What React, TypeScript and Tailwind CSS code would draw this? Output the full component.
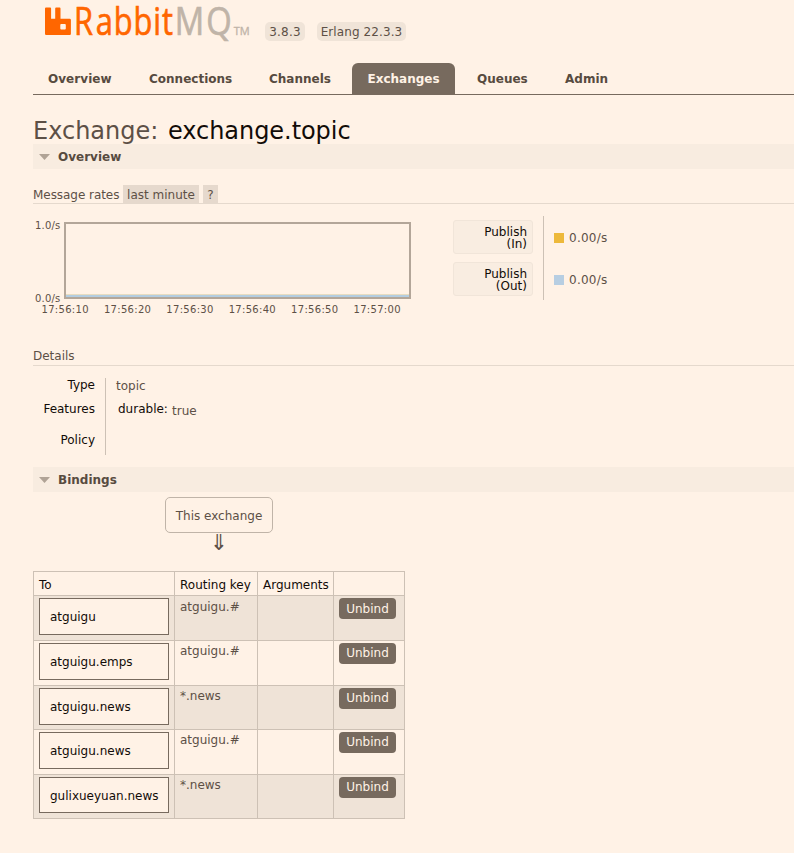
import type { ReactNode } from 'react';

const tabs = [
  { name: 'Overview', cls: 'ml-[15px] w-[65px] tracking-[0.05px]' },
  { name: 'Connections', cls: 'ml-[36px] w-[84px]' },
  { name: 'Channels', cls: 'ml-[36px] w-[63px]' },
  { name: 'Exchanges', cls: '', active: true },
  { name: 'Queues', cls: 'ml-[22px] w-[52px]' },
  { name: 'Admin', cls: 'ml-[36px] w-[45px]' },
];

const times = ['17:56:10', '17:56:20', '17:56:30', '17:56:40', '17:56:50', '17:57:00'];

const bindings = [
  { to: 'atguigu', key: 'atguigu.#', row: 'h-[45px]', box: 'h-[37px] leading-[37px]', keyCls: 'pt-[2px]', btn: 'leading-[23px]' },
  { to: 'atguigu.emps', key: 'atguigu.#', row: 'h-[45px]', box: 'h-[37px] leading-[36px]', keyCls: 'pt-px', btn: 'leading-[21px]' },
  { to: 'atguigu.news', key: '*.news', row: 'h-[44px]', box: 'h-[37px] leading-[36px]', keyCls: 'pt-px', btn: 'leading-[21px]' },
  { to: 'atguigu.news', key: 'atguigu.#', row: 'h-[45px]', box: 'h-[37px] leading-[36px]', keyCls: 'pt-px', btn: 'leading-[21px]' },
  { to: 'gulixueyuan.news', key: '*.news', row: 'h-[44px]', box: 'h-[36px] leading-[36px]', keyCls: 'pt-px', btn: 'leading-[21px]' },
];

function Logo() {
  return (
    <svg width="206" height="48" viewBox="0 0 206 48" className="shrink-0 overflow-visible font-['Open_Sans']">
      <path
        fill="#ff6600"
        d="M1 1.6h4.2q.9 0 .9.9v10.2h4.1V2.5q0-.9.9-.9h3.5q.9 0 .9.9v10.2h9.2q1.2 0 1.2 1.2V28q0 1-1.2 1H1.2Q0 29 0 28V2.6q0-1 1-1zM16.2 18q-.9 0-.9.9v3.7q0 .9.9.9h3.7q.9 0 .9-.9v-3.7q0-.9-.9-.9z"
      />
      <g transform="scale(0.8 1)">
        <text x="36.4 63.4 85.8 110.6 135.4 146.2" y="29" fontSize="38.5" fill="#ff6600" stroke="#ff6600" strokeWidth="0.7">
          Rabbit
        </text>
      </g>
      <g transform="scale(0.85 1)">
        <text x="152.6 189.6" y="29" fontSize="38.5" fill="#c0b4a8" stroke="#c0b4a8" strokeWidth="0.7">
          MQ
        </text>
      </g>
      <text x="188.8" y="29" fontSize="10.5" fill="#c0b4a8" stroke="#c0b4a8" strokeWidth="0.3" textLength="16" lengthAdjust="spacingAndGlyphs">
        TM
      </text>
    </svg>
  );
}

function SectionBar({ children }: { children: ReactNode }) {
  return (
    <h2 className="flex h-[25px] items-center bg-[#f8ece0] pl-[6px] font-bold text-[#574b40]">
      <svg width="11" height="6" viewBox="0 0 11 6" className="mr-[8px]">
        <path d="M0 0h11L5.5 6z" fill="#b0a396" />
      </svg>
      <span className="pt-[2px]">{children}</span>
    </h2>
  );
}

function Publish({ dir, color }: { dir: string; color: string }) {
  return (
    <div className="flex h-[42px] items-center">
      <div className="h-[34px] w-[80px] rounded-[3px] border border-[#f1e5d9] bg-[#f9ede1] pt-[5px] pr-[5px] text-right leading-[12px] text-[#120c08]">
        Publish
        <br />({dir})
      </div>
      <div className="ml-[10px] flex h-full items-center border-l border-[#cdc1b5] pl-[10px]">
        <span className={`mr-[5px] mt-[2px] h-[10px] w-[10px] ${color}`} />
        <span className="pt-[2px] tracking-[0.25px]">0.00/s</span>
      </div>
    </div>
  );
}

export default function App() {
  return (
    <div className="h-[853px] w-[794px] overflow-hidden bg-[#fff2e6] pl-[33px] font-['DejaVu_Sans',sans-serif] text-[12px] leading-[15px] whitespace-nowrap text-[#5d5046]">
      <header className="flex h-[63px] pl-[12px] pt-[6px]">
        <Logo />
        <span className="ml-[14px] mt-[16px] h-[19px] w-[40px] rounded-[5px] bg-[#f0e4d8] text-center leading-[20px] tracking-[0.2px]">3.8.3</span>
        <span className="ml-[12px] mt-[16px] h-[19px] w-[89px] rounded-[5px] bg-[#f0e4d8] text-center leading-[20px] tracking-[0.1px]">Erlang 22.3.3</span>
      </header>

      <nav className="flex h-[32px] border-b border-[#776a5e] font-bold leading-[32px] text-[#574b40]">
        {tabs.map((t) =>
          t.active ? (
            <a key={t.name} className="ml-[20px] h-[31px] w-[103px] rounded-t-[6px] bg-[#776a5e] text-center text-[#fff2e6]">
              {t.name}
            </a>
          ) : (
            <a key={t.name} className={t.cls}>
              {t.name}
            </a>
          ),
        )}
      </nav>

      <h1 className="flex h-[49px] pt-[21px] text-[24px] leading-[30px]">
        <span className="w-[135px]">Exchange:</span>
        <span className="tracking-[-0.05px] text-[#120c08]">exchange.topic</span>
      </h1>

      <SectionBar>Overview</SectionBar>

      <div className="mt-[16px] flex h-[19px] border-b border-[#e5d9cd] leading-[20px]">
        <span className="w-[90px] tracking-[-0.05px]">Message rates</span>
        <span className="h-[18px] w-[76px] bg-[#e6d9cd] text-center">last minute</span>
        <span className="ml-[4px] h-[18px] w-[15px] bg-[#e6d9cd] text-center">?</span>
      </div>

      <div className="mt-[12px] flex h-[130px]">
        <div className="w-[420px] pt-[6px] text-[10px]">
          <div className="flex">
            <div className="flex h-[77px] w-[31px] flex-col justify-between pl-[2px] leading-[8px] tracking-[0.2px]">
              <span>1.0/s</span>
              <span className="-mb-[4px]">0.0/s</span>
            </div>
            <div className="flex h-[77px] w-[347px] flex-col justify-end border-2 border-[#b3a699]">
              <div className="h-px bg-[#e8dcc0]" />
              <div className="h-[2px] bg-[#b3cde0]" />
            </div>
          </div>
          <div className="mt-[3px] ml-[1px] flex">
            {times.map((t) => (
              <span key={t} className="w-[62.4px] text-center tracking-[0.3px]">
                {t}
              </span>
            ))}
          </div>
        </div>
        <div>
          <Publish dir="In" color="bg-[#edb93b]" />
          <Publish dir="Out" color="bg-[#b7cee2]" />
        </div>
      </div>

      <h3 className="mt-[2px] h-[18px] border-b border-[#e5d9cd] leading-[17px]">Details</h3>

      <div className="mt-[12px] flex h-[77px]">
        <div className="flex w-[73px] flex-col border-r border-[#cdc1b5] pr-[10px] text-right text-[#120c08]">
          <span className="h-[24px]">Type</span>
          <span className="h-[31px]">Features</span>
          <span>Policy</span>
        </div>
        <div className="pl-[10px]">
          <div className="h-[24px] pt-px">topic</div>
          <div className="flex pl-[2px]">
            <span className="w-[54px] text-[#120c08]">durable:</span>
            <span className="pt-[2px]">true</span>
          </div>
        </div>
      </div>

      <div className="mt-[12px]">
        <SectionBar>Bindings</SectionBar>
      </div>

      <div className="mt-[5px] flex w-[372px] flex-col items-center">
        <div className="h-[36px] w-[108px] rounded-[5px] border border-[#c0b4a8] text-center leading-[36px]">This exchange</div>
        <div className="h-[38px] text-[22px] leading-[20px]">⇓</div>
      </div>

      <div className="w-[372px] border-t border-l border-[#cdc1b5]">
        <div className="grid h-[24px] grid-cols-[141px_83px_76px_71px] text-[#120c08] [&>*]:h-[24px] [&>*]:border-r [&>*]:border-b [&>*]:border-[#cdc1b5] [&>*]:pt-[2px] [&>*]:pl-[5px] [&>*]:leading-[22px]">
          <div>To</div>
          <div>Routing key</div>
          <div>Arguments</div>
          <div />
        </div>
        {bindings.map((b, i) => (
          <div
            key={i}
            className={`grid grid-cols-[141px_83px_76px_71px] ${b.row} ${i % 2 === 0 ? 'bg-[#efe3d7]' : ''} [&>*]:border-r [&>*]:border-b [&>*]:border-[#cdc1b5] [&>*]:pt-[2px] [&>*]:pl-[5px]`}
          >
            <div>
              <div className={`w-[130px] border border-[#776a5e] bg-[#fff2e6] pl-[10px] text-[#120c08] ${b.box}`}>{b.to}</div>
            </div>
            <div>
              <span className={`block ${b.keyCls}`}>{b.key}</span>
            </div>
            <div />
            <div>
              <button className={`block h-[21px] w-[57px] rounded-[4px] bg-[#776a5e] text-[#fff2e6] ${b.btn}`}>Unbind</button>
            </div>
          </div>
        ))}
      </div>
    </div>
  );
}
